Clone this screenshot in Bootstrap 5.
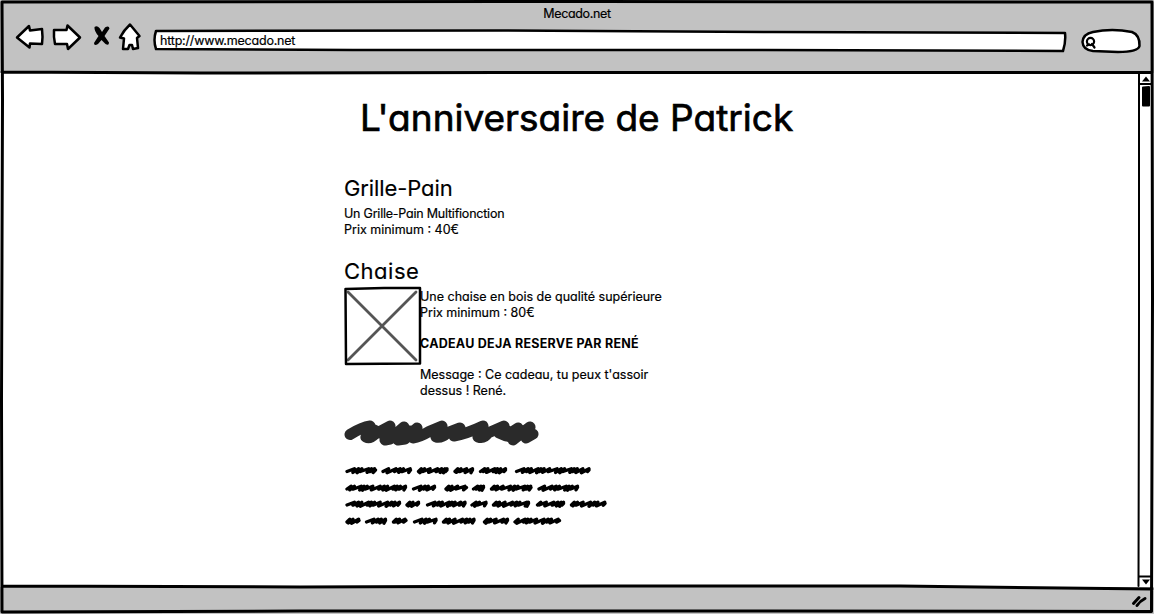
<!DOCTYPE html>
<html lang="fr">
<head>
<meta charset="utf-8">
<title>Mecado.net</title>
<meta name="viewport" content="width=device-width, initial-scale=1">
<link href="https://cdn.jsdelivr.net/npm/bootstrap@5.3.0/dist/css/bootstrap.min.css" rel="stylesheet">
<style>
  body { font-family: Inter, Lato, sans-serif; font-feature-settings: "cv11" 1; font-size: 12.5px; line-height: 16px; color: #000; background: #fff; -webkit-text-stroke: .2px #000; }
  svg { display: block; overflow: visible; }
  .ink { fill: none; stroke: #000; stroke-width: 3; stroke-linecap: round; stroke-linejoin: round; }
  .ink-fill { fill: #fff; stroke-width: 2.5; }
  .ink-thin { stroke-width: 2; }
  .ink-cross { stroke: #555; stroke-width: 2.8; }
  .ink-scrawl { stroke: #2a2a2a; stroke-width: 11; }
  .ink-words { stroke-width: 3.3; }
  .chrome { background: #c2c2c2; }
  .topbar { height: 73px; }
  .site-name { padding-top: 6px; height: 22px; letter-spacing: -.35px; }
  .tools { height: 50px; padding-left: 15px; }
  .address { width: 914px; height: 22px; margin-left: 8px; }
  .address span { left: 7px; top: 3px; letter-spacing: -.2px; }
  .finder { margin-left: 14px; }
  .statusbar { height: 27px; padding: 7px 6px 0 0; }
  .scroller { width: 16px; }
  .page { padding-left: 344px; }
  .page h1 { font-size: 37px; line-height: 44px; font-weight: 400; margin: 23px 0 0 16px; -webkit-text-stroke-width: .7px; }
  .page h2 { font-size: 22px; line-height: 28px; font-weight: 400; margin: 0; -webkit-text-stroke-width: .15px; }
  .toaster { margin-top: 34px; }
  .toaster h2 { letter-spacing: -.1px; }
  .toaster p { margin: 4px 0 0; }
  .tight { letter-spacing: -.22px; }
  .chair { margin-top: 19px; }
  .chair h2 { letter-spacing: .5px; }
  .photo { margin-top: 2px; }
  .gift-text { width: 262px; margin-top: 4px; }
  .gift-text p { margin-bottom: 15px; }
  .reserved { letter-spacing: .25px; -webkit-text-stroke-width: 0; }
  .scrawls { margin-top: 17px; }
</style>
</head>
<body class="m-0 overflow-hidden">
<div class="d-flex flex-column vh-100 position-relative">
  <header class="topbar chrome flex-shrink-0">
    <div class="site-name text-center">Mecado.net</div>
    <nav class="tools d-flex align-items-start">
      <svg width="130" height="34" viewBox="15 22 130 34">
        <g class="ink ink-fill">
          <path d="M17 37.500 29 26 30 30.500 42 29Q43 37 42 44L30 43.500 29.500 47.500Z"/>
          <path d="M54 30 66.500 30 67.500 25.500 80 37.500 68 49 67 44 55 44Q53.500 37 54 30Z"/>
          <path d="M130 24.500 139.500 36 137 38 138 48 133 49 132 45 129.500 45 128 49 123 49 124 38.500 120 37.500Q124 30 130 24.500Z"/>
        </g>
        <path d="M94.500 27Q97 25 99.500 28L102 32 105 27.500Q109 25 109.500 28.500L104.500 36 109 42.500Q109 46 105.500 44L101.500 40 98 44Q94 46.500 94 43L98.500 36Q94 31 94.500 27Z"/>
      </svg>
      <div class="address position-relative mt-2">
        <svg width="914" height="22" viewBox="0 0 914 22"><path class="ink ink-fill" d="M3 1 350 .5 620 2 912 3Q913 12 910 21L600 20 200 20 3 19Q0 10 3 1Z"/></svg>
        <span class="position-absolute">http://www.mecado.net</span>
      </div>
      <svg class="finder mt-2" width="60" height="24" viewBox="1081 30 60 24">
        <path class="ink ink-fill" d="M1093 32Q1112 28 1132 32Q1140 35 1139.500 46Q1138 52 1118 52L1093 51Q1083 50 1082.500 42Q1083 34 1093 32Z"/>
        <g class="ink" style="stroke-width:2.200"><circle cx="1090.500" cy="41.500" r="3.600"/><path d="M1087 45.500 1089 44.500M1092 44 1094.500 47.500"/></g>
      </svg>
    </nav>
  </header>
  <div class="d-flex flex-grow-1">
    <main class="page flex-grow-1">
      <h1>L'anniversaire de Patrick</h1>
      <section class="toaster">
        <h2>Grille-Pain</h2>
        <p><span class="tight">Un Grille-Pain Multifionction</span><br>Prix minimum : 40€</p>
      </section>
      <section class="chair">
        <h2>Chaise</h2>
        <div class="d-flex">
          <svg class="photo" width="76" height="78" viewBox="0 0 76 78">
            <path class="ink ink-cross" d="M4 5 72 73M72 5 4 73"/>
            <path class="ink ink-fill" style="fill:none" d="M1.500 2 40 1 76 1 76 76.500 2 77Z"/>
          </svg>
          <div class="gift-text">
            <p>Une chaise en bois de qualité supérieure<br>Prix minimum : 80€</p>
            <p class="fw-bold reserved text-nowrap">CADEAU DEJA RESERVE PAR RENÉ</p>
            <p class="mb-0">Message : Ce cadeau, tu peux t'assoir<br>dessus ! René.</p>
          </div>
        </div>
      </section>
      <svg id="scribbles" class="scrawls" width="270" height="112" viewBox="344 416 270 112">
        <path class="ink ink-scrawl" d="M350 434.500Q362 427 370 426L366 437Q370 439 375 434L390 426 385 440 390 439 404 427 398 440 405 439 417 428 413 438Q420 437 430 431L442 426 436 437Q442 438 447 433L460 428 454 436Q466 434 483 426L478 437Q484 439 488 433L504 426 499 433 506 436 518 428 513 440 518 436 530 427 526 438 533 434M506 430 510 437 515 434M370 428 380 433M404 430 414 432M518 430 530 434"/>
      </svg>
    </main>
    <aside class="scroller">
      <svg width="15" height="514" viewBox="1138 73 15 514">
        <path class="ink ink-thin" d="M1139 74 1139 320 1138.500 586M1139 84 1152 84M1139 576.500 1152 576.500"/>
        <path d="M1142 81.500 1146 76.500 1150 81.500ZM1142 579.500 1150 579.500 1146 584.500Z"/>
        <path d="M1143 87.500 1149 87 1149 105.500 1143 105.500Z" stroke="#000" stroke-width="2" stroke-linejoin="round"/>
      </svg>
    </aside>
  </div>
  <footer class="statusbar chrome flex-shrink-0 d-flex justify-content-end">
    <svg width="18" height="14" viewBox="1131 594 18 14"><path class="ink" d="M1134.500 603.500 1140 597.500M1138 605.500Q1141 601 1146 598.500"/></svg>
  </footer>
  <svg class="position-absolute top-0 start-0 pe-none" width="1154" height="614">
    <path class="ink" d="M2 2 600 1.500 1152 2 1152.500 300 1151.500 611.500 700 611 300 611 2 612 1.500 400 2.500 100ZM2 72 200 73 500 72.500 1152 72.500M2 586 300 587 600 586 900 586 1152 589"/>
  </svg>
</div>
<script>
  // Each row: centre y followed by [start, end] of every scribbled word
  const rows = [
    [470.5, [345.5,377],[381.5,412],[417,448.5],[453.5,474],[479,507],[515,590.5]],
    [488, [345.5,407],[412,436],[444.5,468],[472,485],[490,532.5],[537.5,579]],
    [504, [345.5,401],[405.5,420],[426,466.5],[470.5,487.5],[492,530],[536,565],[570,606.5]],
    [521, [345.5,360.5],[365,387],[392,407.5],[413,437.5],[442,475.5],[483,509],[513.5,561]]
  ];
  const steps = [7.4, 4.2, 3.2, 6.8, 2.8, 3.2, 5.6];
  const drops = [1.2, 2, 2.3, 1, 1.9];
  let d = "", k = 0;
  for (const [y, ...words] of rows) for (const [a, b] of words) {
    let x = a + 1.5;
    d += `M${x} ${y + 1}`;
    while (x < b - 3) {
      const nx = Math.min(x + steps[k++ % 7], b - 1.5);
      d += `L${nx} ${y - 1.8}L${nx - 1.5} ${y + drops[k % 5]}`;
      x = nx;
    }
    d += `L${b - 1.5} ${y - .5}`;
  }
  const words = document.createElementNS("http://www.w3.org/2000/svg", "path");
  words.setAttribute("d", d);
  words.setAttribute("class", "ink ink-words");
  document.getElementById("scribbles").append(words);
</script>
</body>
</html>
